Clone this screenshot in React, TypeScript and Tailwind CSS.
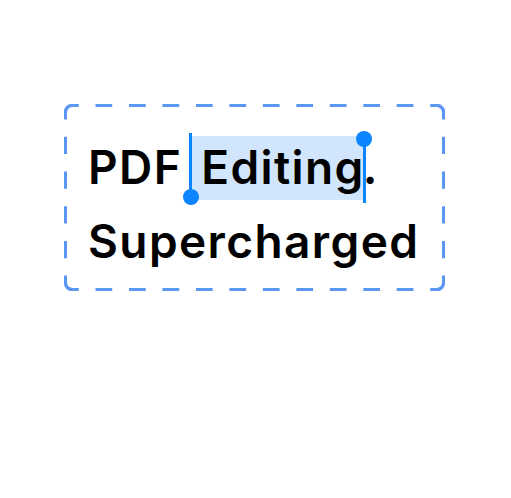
import React from "react";

function DashedFrame() {
  const x1 = 1.5, y1 = 1.5, x2 = 379.5, y2 = 185.5, r = 6.5;
  const top = `M ${x1} ${y1 + r} A ${r} ${r} 0 0 1 ${x1 + r} ${y1} L ${x2 - r} ${y1} A ${r} ${r} 0 0 1 ${x2} ${y1 + r}`;
  const bottom = `M ${x1} ${y2 - r} A ${r} ${r} 0 0 0 ${x1 + r} ${y2} L ${x2 - r} ${y2} A ${r} ${r} 0 0 0 ${x2} ${y2 - r}`;
  const left = `M ${x1 + r} ${y1} A ${r} ${r} 0 0 0 ${x1} ${y1 + r} L ${x1} ${y2 - r} A ${r} ${r} 0 0 0 ${x1 + r} ${y2}`;
  const right = `M ${x2 - r} ${y1} A ${r} ${r} 0 0 1 ${x2} ${y1 + r} L ${x2} ${y2 - r} A ${r} ${r} 0 0 1 ${x2 - r} ${y2}`;
  const common = {
    fill: "none",
    stroke: "#5b97f2",
    strokeWidth: 3,
    strokeDasharray: "1 1",
  } as const;
  return (
    <svg
      className="pointer-events-none absolute inset-0"
      width={381}
      height={187}
      viewBox="0 0 381 187"
    >
      <path d={top} pathLength={23} {...common} />
      <path d={bottom} pathLength={23} {...common} />
      <path d={left} pathLength={11} {...common} />
      <path d={right} pathLength={11} {...common} />
    </svg>
  );
}

function Selected({ children }: { children: React.ReactNode }) {
  return (
    <span className="relative ml-[6px] mr-[-2px] inline-block">
      <span className="absolute -left-[9px] right-[0px] top-[6px] bottom-[4px] bg-[#d1e6fc]" />
      <span className="relative">{children}</span>
      <span className="absolute -left-[12px] top-[3px] h-[64px] w-[2.5px] bg-[#0a84ff]" />
      <span className="absolute -left-[18.5px] top-[59px] h-[16px] w-[16px] rounded-full bg-[#0a84ff]" />
      <span className="absolute right-[-1px] top-[9px] h-[64px] w-[2.5px] bg-[#0a84ff]" />
      <span className="absolute right-[-7.5px] top-[1px] h-[16px] w-[16px] rounded-full bg-[#0a84ff]" />
    </span>
  );
}

export default function App() {
  return (
    <div className="min-h-screen w-full bg-white">
      <div className="pl-[64px] pt-[104px]">
        <div className="relative h-[187px] w-[381px] pl-[24px] pt-[26px]">
          <DashedFrame />
          <p className="relative whitespace-nowrap font-['Inter','Noto_Sans',sans-serif] text-[46px] font-semibold leading-[74px] tracking-[1.4px] text-black">
            PDF <Selected>Editing</Selected>.
            <br />
            Supercharged
          </p>
        </div>
      </div>
    </div>
  );
}
